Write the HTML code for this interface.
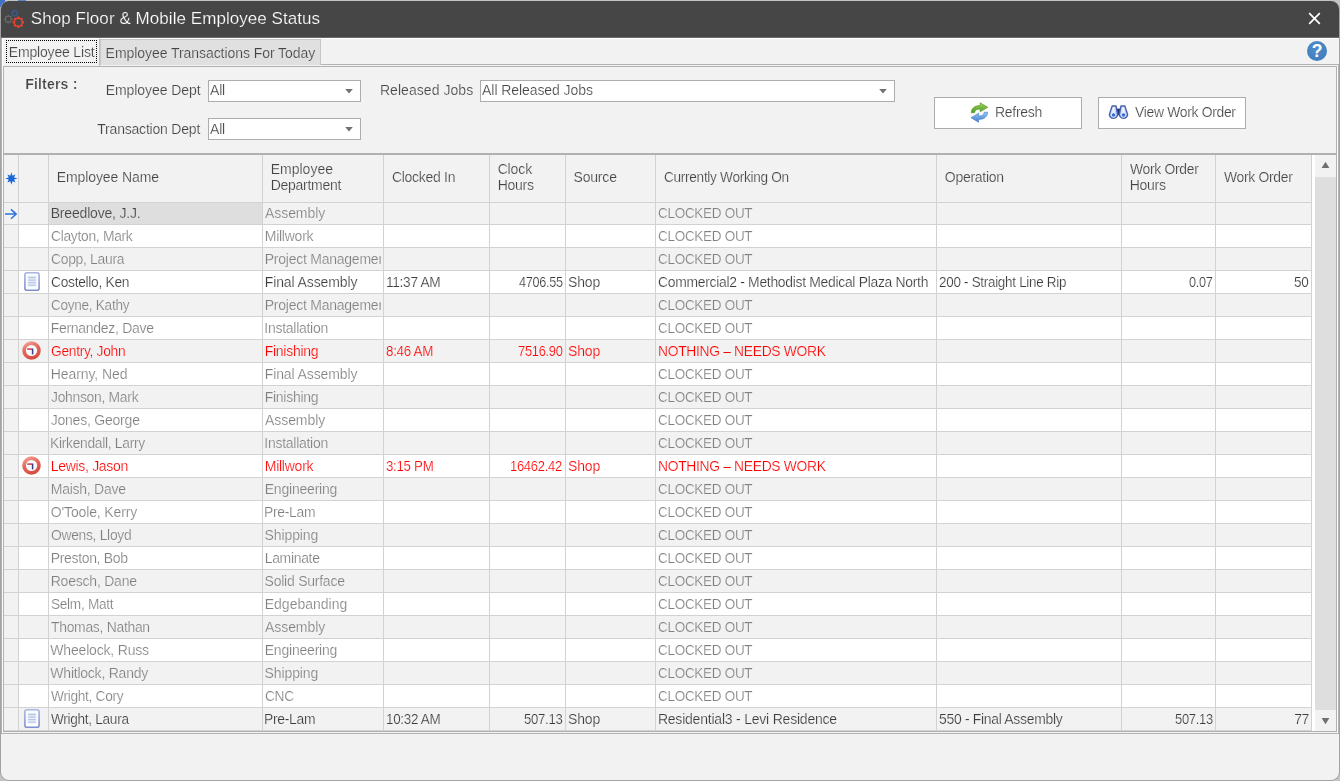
<!DOCTYPE html><html lang="en"><head><meta charset="utf-8"><title>Shop Floor &amp; Mobile Employee Status</title><style>
*{box-sizing:border-box;margin:0;padding:0}
html,body{width:1340px;height:781px;overflow:hidden;background:#f2f2f2}
body{position:relative;font-family:"Liberation Sans",sans-serif;font-size:14px;color:#4a4a4a}
.a{position:absolute}
.t{position:absolute;white-space:nowrap;line-height:20px;height:20px;transform-origin:0 0}
.combo{background:#fff;border:1px solid #adadad;height:22px}
.btn{background:#fff;border:1px solid #adadad;height:32px;top:97px;width:148px}
.vl{position:absolute;width:1px;background:#d2d2d2;top:155px;height:576px}
.hl{position:absolute;height:1px;background:#d2d2d2;left:4px;width:1308px}
.rw{position:absolute;left:19px;width:1296px;background:#fff}
.ic{position:absolute;overflow:visible}
</style></head><body>
<div class="a" style="left:0;top:0;width:1340px;height:781px;background:#c4c4c4"></div>
<div class="a" style="left:0;top:0;width:5px;height:7px;background:#3f74c8"></div>
<div class="a" style="left:18px;top:0;width:8px;height:1px;background:#5b86c9"></div>
<div class="a" style="left:0;top:1px;width:1340px;height:780px;background:#a2a2a2;border-radius:9px"></div>
<div class="a" style="left:1px;top:1px;width:1338px;height:779px;background:#f2f2f2;border-radius:8px"></div>
<div class="a" style="left:1px;top:1px;width:1338px;height:37px;background:#464646;border-radius:8px 8px 0 0"></div>
<div class="a" style="left:1px;top:37px;width:1338px;height:1px;background:#6a6a6a"></div>
<div class="a" style="left:2px;top:38px;width:1336px;height:1px;background:#fff"></div>
<div class="a" style="left:1px;top:38px;width:1px;height:696px;background:#b2b2b2"></div>
<div class="a" style="left:1338px;top:64px;width:1px;height:670px;background:#b2b2b2"></div>
<div class="a" style="left:2px;top:39px;width:1px;height:694px;background:#fbfbfb"></div>
<div class="a" style="left:1337px;top:66px;width:1px;height:667px;background:#fbfbfb"></div>
<div class="a" style="left:1px;top:64px;width:1338px;height:1px;background:#b4b4b4"></div>
<div class="a" style="left:1px;top:733px;width:1338px;height:1px;background:#b4b4b4"></div>
<div class="a" style="left:3px;top:66px;width:1334px;height:666px;border:1px solid #b2b2b2;background:#f2f2f2"></div>
<div class="a" style="left:2px;top:38px;width:98px;height:28px;background:#f2f2f2;border-left:1px solid #fff;border-top:1px solid #fff;border-right:1px solid #c0c0c0"></div>
<div class="a" style="left:6px;top:40px;width:91px;height:23px;border:1px dotted #000"></div>
<div class="a" style="left:100px;top:39px;width:221px;height:26px;background:#e0e0e0;border:1px solid #c6c6c6;border-bottom:none"></div>
<div class="a combo" style="left:208px;top:80px;width:153px"></div>
<svg class="ic" style="left:344.4px;top:88px" width="10" height="6" viewBox="0 0 10 6"><path d="M1.2 0.9 L8.8 0.9 L5 5.4 Z" fill="#707070"/></svg>
<div class="a combo" style="left:208px;top:118px;width:153px"></div>
<svg class="ic" style="left:344.4px;top:126px" width="10" height="6" viewBox="0 0 10 6"><path d="M1.2 0.9 L8.8 0.9 L5 5.4 Z" fill="#707070"/></svg>
<div class="a combo" style="left:480px;top:80px;width:415px"></div>
<svg class="ic" style="left:878.4px;top:88px" width="10" height="6" viewBox="0 0 10 6"><path d="M1.2 0.9 L8.8 0.9 L5 5.4 Z" fill="#707070"/></svg>
<div class="a btn" style="left:934px"></div>
<div class="a btn" style="left:1098px"></div>

<div class="a" style="left:4px;top:153px;width:1332px;height:2px;background:#b0b0b0"></div>
<div class="a" style="left:49px;top:203px;width:213px;height:21px;background:#dedede"></div>
<div class="hl" style="top:224px"></div>
<div class="rw" style="top:225px;height:22px"></div>
<div class="hl" style="top:247px"></div>
<div class="hl" style="top:270px"></div>
<div class="rw" style="top:271px;height:22px"></div>
<div class="hl" style="top:293px"></div>
<div class="hl" style="top:316px"></div>
<div class="rw" style="top:317px;height:22px"></div>
<div class="hl" style="top:339px"></div>
<div class="hl" style="top:362px"></div>
<div class="rw" style="top:363px;height:22px"></div>
<div class="hl" style="top:385px"></div>
<div class="hl" style="top:408px"></div>
<div class="rw" style="top:409px;height:22px"></div>
<div class="hl" style="top:431px"></div>
<div class="hl" style="top:454px"></div>
<div class="rw" style="top:455px;height:22px"></div>
<div class="hl" style="top:477px"></div>
<div class="hl" style="top:500px"></div>
<div class="rw" style="top:501px;height:22px"></div>
<div class="hl" style="top:523px"></div>
<div class="hl" style="top:546px"></div>
<div class="rw" style="top:547px;height:22px"></div>
<div class="hl" style="top:569px"></div>
<div class="hl" style="top:592px"></div>
<div class="rw" style="top:593px;height:22px"></div>
<div class="hl" style="top:615px"></div>
<div class="hl" style="top:638px"></div>
<div class="rw" style="top:639px;height:22px"></div>
<div class="hl" style="top:661px"></div>
<div class="hl" style="top:684px"></div>
<div class="rw" style="top:685px;height:22px"></div>
<div class="hl" style="top:707px"></div>
<div class="hl" style="top:730px"></div>
<div class="hl" style="top:202px"></div>
<div class="vl" style="left:18px"></div>
<div class="vl" style="left:48px"></div>
<div class="vl" style="left:262px"></div>
<div class="vl" style="left:383px"></div>
<div class="vl" style="left:489px"></div>
<div class="vl" style="left:565px"></div>
<div class="vl" style="left:655px"></div>
<div class="vl" style="left:936px"></div>
<div class="vl" style="left:1121px"></div>
<div class="vl" style="left:1215px"></div>
<div class="vl" style="left:1311px"></div>
<div class="a" style="left:1312px;top:155px;width:3px;height:576px;background:#fff"></div>
<div class="a" style="left:1315px;top:155px;width:21px;height:576px;background:#f2f2f2"></div>
<div class="a" style="left:1315px;top:177px;width:21px;height:533px;background:#dedede"></div>
<svg class="ic" style="left:1321px;top:161px" width="9" height="8" viewBox="0 0 9 8"><path d="M4.5 0.8 L8.4 7 L0.6 7 Z" fill="#707070"/></svg>
<svg class="ic" style="left:1321px;top:717px" width="9" height="8" viewBox="0 0 9 8"><path d="M4.5 7.2 L8.4 1 L0.6 1 Z" fill="#707070"/></svg>
<svg class="ic" style="left:0;top:0" width="30" height="38" viewBox="0 0 30 38"><path d="M14.13 9.75 L15.37 9.75 L15.42 10.50 L16.25 10.84 L16.82 10.35 L17.70 11.23 L17.21 11.80 L17.55 12.63 L18.30 12.68 L18.30 13.92 L17.55 13.97 L17.21 14.80 L17.70 15.37 L16.82 16.25 L16.25 15.76 L15.42 16.10 L15.37 16.85 L14.13 16.85 L14.08 16.10 L13.25 15.76 L12.68 16.25 L11.80 15.37 L12.29 14.80 L11.95 13.97 L11.20 13.92 L11.20 12.68 L11.95 12.63 L12.29 11.80 L11.80 11.23 L12.68 10.35 L13.25 10.84 L14.08 10.50 Z M12.85 13.30 a1.90 1.90 0 1 0 3.80 0 a1.90 1.90 0 1 0 -3.80 0 Z" fill="#3a5d90" fill-rule="evenodd"/><path d="M7.56 14.96 L9.04 14.96 L9.10 15.86 L10.10 16.27 L10.77 15.68 L11.82 16.73 L11.23 17.40 L11.64 18.40 L12.54 18.46 L12.54 19.94 L11.64 20.00 L11.23 21.00 L11.82 21.67 L10.77 22.72 L10.10 22.13 L9.10 22.54 L9.04 23.44 L7.56 23.44 L7.50 22.54 L6.50 22.13 L5.83 22.72 L4.78 21.67 L5.37 21.00 L4.96 20.00 L4.06 19.94 L4.06 18.46 L4.96 18.40 L5.37 17.40 L4.78 16.73 L5.83 15.68 L6.50 16.27 L7.50 15.86 Z M5.90 19.20 a2.40 2.40 0 1 0 4.80 0 a2.40 2.40 0 1 0 -4.80 0 Z" fill="#686868" fill-rule="evenodd"/><path d="M17.30 16.59 L19.30 16.59 L19.38 17.79 L20.72 18.34 L21.64 17.55 L23.05 18.96 L22.26 19.88 L22.81 21.22 L24.01 21.30 L24.01 23.30 L22.81 23.38 L22.26 24.72 L23.05 25.64 L21.64 27.05 L20.72 26.26 L19.38 26.81 L19.30 28.01 L17.30 28.01 L17.22 26.81 L15.88 26.26 L14.96 27.05 L13.55 25.64 L14.34 24.72 L13.79 23.38 L12.59 23.30 L12.59 21.30 L13.79 21.22 L14.34 19.88 L13.55 18.96 L14.96 17.55 L15.88 18.34 L17.22 17.79 Z M15.10 22.30 a3.20 3.20 0 1 0 6.40 0 a3.20 3.20 0 1 0 -6.40 0 Z" fill="#f0402f" fill-rule="evenodd"/></svg><svg class="ic" style="left:1308px;top:12px" width="13" height="13" viewBox="0 0 13 13"><path d="M1.2 1.2 L11.8 11.8 M11.8 1.2 L1.2 11.8" stroke="#fff" stroke-width="1.7" fill="none"/></svg><svg class="ic" style="left:1306px;top:40px" width="22" height="22" viewBox="0 0 22 22"><defs><radialGradient id="hg" cx="0.45" cy="0.35" r="0.75"><stop offset="0" stop-color="#4f8ccb"/><stop offset="1" stop-color="#3f7cbc"/></radialGradient></defs><circle cx="11" cy="11" r="10" fill="url(#hg)"/><text x="11" y="17.2" text-anchor="middle" font-family="'Liberation Sans',sans-serif" font-weight="bold" font-size="17.5" fill="#fff">?</text></svg><svg class="ic" style="left:969px;top:101px" width="21" height="23" viewBox="0 0 21 23"><defs><linearGradient id="rg" x1="0" y1="0" x2="0" y2="1"><stop offset="0" stop-color="#9fd35a"/><stop offset="1" stop-color="#4f9a23"/></linearGradient><linearGradient id="rb" x1="0" y1="0" x2="0" y2="1"><stop offset="0" stop-color="#9cc9f2"/><stop offset="1" stop-color="#3f7fd0"/></linearGradient></defs><path d="M2.2 11.8 C2.4 7.2 5.6 4.6 11.2 4.6 L11.2 1.8 L18.8 6.3 L11.2 10.8 L11.2 8.0 C8.2 8.0 6.0 8.8 5.4 11.8 Z" fill="url(#rg)" stroke="#4e9426" stroke-width="0.6" stroke-linejoin="round"/><path d="M18.6 11.2 C18.4 15.8 15.2 18.4 9.6 18.4 L9.6 21.2 L2.0 16.7 L9.6 12.2 L9.6 15.0 C12.6 15.0 14.8 14.2 15.4 11.2 Z" fill="url(#rb)" stroke="#3b74c2" stroke-width="0.6" stroke-linejoin="round"/></svg><svg class="ic" style="left:1108px;top:104px" width="22" height="17" viewBox="0 0 22 17"><defs><linearGradient id="bg1" x1="0" y1="0" x2="1" y2="0"><stop offset="0" stop-color="#bcc9ea"/><stop offset="0.5" stop-color="#eef2fb"/><stop offset="1" stop-color="#aebde4"/></linearGradient></defs><rect x="8.2" y="4.6" width="4.6" height="6.6" fill="#22347f"/><path d="M4.2 2.0 L8.0 2.0 L9.6 10.2 A4.1 4.1 0 1 1 1.4 10.4 Z" fill="url(#bg1)" stroke="#4561ad" stroke-width="1.4" stroke-linejoin="round"/><path d="M13.0 2.0 L16.8 2.0 L19.6 10.4 A4.1 4.1 0 1 1 11.4 10.2 Z" fill="url(#bg1)" stroke="#4561ad" stroke-width="1.4" stroke-linejoin="round"/><circle cx="5.5" cy="11.0" r="1.7" fill="#2f6fdc"/><circle cx="15.5" cy="11.0" r="1.7" fill="#2f6fdc"/></svg><svg class="ic" style="left:4px;top:170px" width="15" height="17" viewBox="0 0 15 17"><path d="M7.40 2.30 L8.51 5.82 L11.36 4.54 L10.08 7.39 L13.60 8.50 L10.08 9.61 L11.36 12.46 L8.51 11.18 L7.40 14.70 L6.29 11.18 L3.44 12.46 L4.72 9.61 L1.20 8.50 L4.72 7.39 L3.44 4.54 L6.29 5.82 Z" fill="#1768d8"/></svg><svg class="ic" style="left:4px;top:207px" width="14" height="14" viewBox="0 0 14 14"><path d="M1 7.1 L12 7.1 M7 2.4 L12.2 7.1 L7 11.8" stroke="#2d74de" stroke-width="1.5" fill="none" stroke-linejoin="miter"/></svg><svg class="ic" style="left:23px;top:271px" width="18" height="21" viewBox="0 0 18 21"><defs><linearGradient id="dg1" x1="0" y1="0" x2="0" y2="1"><stop offset="0" stop-color="#a9b6e2"/><stop offset="1" stop-color="#7f90cc"/></linearGradient></defs><rect x="1.9" y="1.7" width="14.2" height="17.6" rx="2" ry="2" fill="#fbfcff" stroke="url(#dg1)" stroke-width="1.6"/><path d="M5.2 6.5 H12.8 M5.2 9.1 H12.8 M5.2 11.6 H12.8 M5.2 14.2 H12.8" stroke="#8b9bd1" stroke-width="1.3" fill="none"/><rect x="4.6" y="5.4" width="8.8" height="10.2" fill="#dfe5f6" opacity="0.55"/></svg><svg class="ic" style="left:21px;top:340px" width="21" height="21" viewBox="0 0 21 21"><defs><linearGradient id="rr1" x1="0.2" y1="0" x2="0.6" y2="1"><stop offset="0" stop-color="#f3a79c"/><stop offset="0.45" stop-color="#e4685a"/><stop offset="1" stop-color="#d54a3e"/></linearGradient></defs><circle cx="10.5" cy="10.5" r="9.3" fill="url(#rr1)"/><circle cx="10.5" cy="10.5" r="5.6" fill="#f7fbff"/><path d="M6.2 9.1 H11.4" stroke="#d2374a" stroke-width="1.5" fill="none"/><path d="M11.6 8.6 V14.4" stroke="#3a3f7d" stroke-width="1.5" fill="none"/></svg><svg class="ic" style="left:21px;top:455px" width="21" height="21" viewBox="0 0 21 21"><defs><linearGradient id="rr2" x1="0.2" y1="0" x2="0.6" y2="1"><stop offset="0" stop-color="#f3a79c"/><stop offset="0.45" stop-color="#e4685a"/><stop offset="1" stop-color="#d54a3e"/></linearGradient></defs><circle cx="10.5" cy="10.5" r="9.3" fill="url(#rr2)"/><circle cx="10.5" cy="10.5" r="5.6" fill="#f7fbff"/><path d="M6.2 9.1 H11.4" stroke="#d2374a" stroke-width="1.5" fill="none"/><path d="M11.6 8.6 V14.4" stroke="#3a3f7d" stroke-width="1.5" fill="none"/></svg><svg class="ic" style="left:23px;top:708px" width="18" height="21" viewBox="0 0 18 21"><defs><linearGradient id="dg2" x1="0" y1="0" x2="0" y2="1"><stop offset="0" stop-color="#a9b6e2"/><stop offset="1" stop-color="#7f90cc"/></linearGradient></defs><rect x="1.9" y="1.7" width="14.2" height="17.6" rx="2" ry="2" fill="#fbfcff" stroke="url(#dg2)" stroke-width="1.6"/><path d="M5.2 6.5 H12.8 M5.2 9.1 H12.8 M5.2 11.6 H12.8 M5.2 14.2 H12.8" stroke="#8b9bd1" stroke-width="1.3" fill="none"/><rect x="4.6" y="5.4" width="8.8" height="10.2" fill="#dfe5f6" opacity="0.55"/></svg>
<div class="a" style="left:0;top:0;width:1340px;height:781px;will-change:transform">
<div class="t" style="left:30.86px;top:9px;color:#ffffff;-webkit-text-stroke:0.2px #464646;font-size:17px;letter-spacing:0.058px">Shop Floor &amp; Mobile Employee Status</div>
<div class="t" style="left:8.81px;top:42px;color:#444444;-webkit-text-stroke:0.2px #f2f2f2;letter-spacing:-0.176px">Employee List</div>
<div class="t" style="left:105.62px;top:43px;color:#444444;-webkit-text-stroke:0.2px #e0e0e0;letter-spacing:-0.060px">Employee Transactions For Today</div>
<div class="t" style="left:25.16px;top:74px;color:#444444;-webkit-text-stroke:0.2px #f2f2f2;font-weight:bold;letter-spacing:0.205px">Filters :</div>
<div class="t" style="left:105.72px;top:80px;color:#444444;-webkit-text-stroke:0.2px #f2f2f2;letter-spacing:-0.068px">Employee Dept</div>
<div class="t" style="left:97.29px;top:119px;color:#444444;-webkit-text-stroke:0.2px #f2f2f2;letter-spacing:-0.205px">Transaction Dept</div>
<div class="t" style="left:379.90px;top:80px;color:#444444;-webkit-text-stroke:0.2px #f2f2f2;letter-spacing:0.054px">Released Jobs</div>
<div class="t" style="left:210.08px;top:80px;color:#444444;-webkit-text-stroke:0.2px #fff;letter-spacing:-0.211px">All</div>
<div class="t" style="left:210.08px;top:119px;color:#444444;-webkit-text-stroke:0.2px #fff;letter-spacing:-0.211px">All</div>
<div class="t" style="left:482.08px;top:80px;color:#444444;-webkit-text-stroke:0.2px #fff;letter-spacing:-0.075px">All Released Jobs</div>
<div class="t" style="left:994.90px;top:102px;color:#444444;-webkit-text-stroke:0.2px #fff;letter-spacing:-0.251px">Refresh</div>
<div class="t" style="left:1134.68px;top:102px;color:#444444;-webkit-text-stroke:0.2px #fff;letter-spacing:-0.300px;transform:scaleX(0.9914)">View Work Order</div>
<div class="t" style="left:56.72px;top:167px;color:#444444;-webkit-text-stroke:0.2px #f2f2f2;letter-spacing:-0.099px">Employee Name</div>
<div class="t" style="left:270.72px;top:159px;color:#444444;-webkit-text-stroke:0.2px #f2f2f2">Employee</div>
<div class="t" style="left:270.72px;top:175px;color:#444444;-webkit-text-stroke:0.2px #f2f2f2;letter-spacing:-0.274px">Department</div>
<div class="t" style="left:391.50px;top:167px;color:#444444;-webkit-text-stroke:0.2px #f2f2f2;letter-spacing:-0.300px;transform:scaleX(0.9995)">Clocked In</div>
<div class="t" style="left:497.64px;top:159px;color:#444444;-webkit-text-stroke:0.2px #f2f2f2;letter-spacing:-0.114px">Clock</div>
<div class="t" style="left:497.72px;top:175px;color:#444444;-webkit-text-stroke:0.2px #f2f2f2;letter-spacing:-0.277px">Hours</div>
<div class="t" style="left:573.55px;top:167px;color:#444444;-webkit-text-stroke:0.2px #f2f2f2;letter-spacing:-0.197px">Source</div>
<div class="t" style="left:663.50px;top:167px;color:#444444;-webkit-text-stroke:0.2px #f2f2f2;letter-spacing:-0.300px;transform:scaleX(0.9728)">Currently Working On</div>
<div class="t" style="left:944.79px;top:167px;color:#444444;-webkit-text-stroke:0.2px #f2f2f2;letter-spacing:-0.269px">Operation</div>
<div class="t" style="left:1129.96px;top:159px;color:#444444;-webkit-text-stroke:0.2px #f2f2f2;letter-spacing:-0.300px;transform:scaleX(0.9911)">Work Order</div>
<div class="t" style="left:1129.72px;top:175px;color:#444444;-webkit-text-stroke:0.2px #f2f2f2;letter-spacing:-0.277px">Hours</div>
<div class="t" style="left:1223.96px;top:167px;color:#444444;-webkit-text-stroke:0.2px #f2f2f2;letter-spacing:-0.300px;transform:scaleX(0.9911)">Work Order</div>
<div class="t" style="left:50.72px;top:203px;color:#444444;-webkit-text-stroke:0.2px #dedede;letter-spacing:-0.183px">Breedlove, J.J.</div>
<div class="t" style="left:265.08px;top:203px;color:#808080;-webkit-text-stroke:0.2px #f2f2f2;letter-spacing:-0.085px">Assembly</div>
<div class="t" style="left:657.50px;top:203px;color:#808080;-webkit-text-stroke:0.2px #f2f2f2;letter-spacing:-0.300px;transform:scaleX(0.9642)">CLOCKED OUT</div>
<div class="t" style="left:50.50px;top:226px;color:#808080;-webkit-text-stroke:0.2px #fff;letter-spacing:-0.300px;transform:scaleX(0.9879)">Clayton, Mark</div>
<div class="t" style="left:264.72px;top:226px;color:#808080;-webkit-text-stroke:0.2px #fff;letter-spacing:-0.245px">Millwork</div>
<div class="t" style="left:657.50px;top:226px;color:#808080;-webkit-text-stroke:0.2px #fff;letter-spacing:-0.300px;transform:scaleX(0.9642)">CLOCKED OUT</div>
<div class="t" style="left:50.50px;top:249px;color:#808080;-webkit-text-stroke:0.2px #f2f2f2;letter-spacing:-0.300px;transform:scaleX(0.9916)">Copp, Laura</div>
<div class="t" style="left:264.72px;top:249px;color:#808080;-webkit-text-stroke:0.2px #f2f2f2;letter-spacing:-0.240px;width:116.48px;overflow:hidden">Project Management</div>
<div class="t" style="left:657.50px;top:249px;color:#808080;-webkit-text-stroke:0.2px #f2f2f2;letter-spacing:-0.300px;transform:scaleX(0.9642)">CLOCKED OUT</div>
<div class="t" style="left:50.50px;top:272px;color:#3c3c3c;-webkit-text-stroke:0.2px #fff;letter-spacing:-0.300px;transform:scaleX(0.9847)">Costello, Ken</div>
<div class="t" style="left:264.72px;top:272px;color:#3c3c3c;-webkit-text-stroke:0.2px #fff;letter-spacing:-0.100px">Final Assembly</div>
<div class="t" style="left:385.50px;top:272px;color:#3c3c3c;-webkit-text-stroke:0.2px #fff;letter-spacing:-0.300px;transform:scaleX(0.9761)">11:37 AM</div>
<div class="t" style="left:518.64px;top:272px;color:#3c3c3c;-webkit-text-stroke:0.2px #fff;letter-spacing:-0.300px;transform:scaleX(0.9046)">4706.55</div>
<div class="t" style="left:568.02px;top:272px;color:#3c3c3c;-webkit-text-stroke:0.2px #fff;letter-spacing:-0.182px">Shop</div>
<div class="t" style="left:657.50px;top:272px;color:#3c3c3c;-webkit-text-stroke:0.2px #fff;letter-spacing:-0.300px;transform:scaleX(0.9935)">Commercial2 - Methodist Medical Plaza North</div>
<div class="t" style="left:939.05px;top:272px;color:#3c3c3c;-webkit-text-stroke:0.2px #fff;letter-spacing:-0.300px;transform:scaleX(0.9603)">200 - Straight Line Rip</div>
<div class="t" style="left:1188.77px;top:272px;color:#3c3c3c;-webkit-text-stroke:0.2px #fff;letter-spacing:-0.300px;transform:scaleX(0.9062)">0.07</div>
<div class="t" style="left:1294.31px;top:272px;color:#3c3c3c;-webkit-text-stroke:0.2px #fff;letter-spacing:-0.300px;transform:scaleX(0.9675)">50</div>
<div class="t" style="left:50.50px;top:295px;color:#808080;-webkit-text-stroke:0.2px #f2f2f2;letter-spacing:-0.300px;transform:scaleX(0.9716)">Coyne, Kathy</div>
<div class="t" style="left:264.72px;top:295px;color:#808080;-webkit-text-stroke:0.2px #f2f2f2;letter-spacing:-0.240px;width:116.48px;overflow:hidden">Project Management</div>
<div class="t" style="left:657.50px;top:295px;color:#808080;-webkit-text-stroke:0.2px #f2f2f2;letter-spacing:-0.300px;transform:scaleX(0.9642)">CLOCKED OUT</div>
<div class="t" style="left:50.72px;top:318px;color:#808080;-webkit-text-stroke:0.2px #fff;letter-spacing:-0.293px">Fernandez, Dave</div>
<div class="t" style="left:264.31px;top:318px;color:#808080;-webkit-text-stroke:0.2px #fff;letter-spacing:-0.270px">Installation</div>
<div class="t" style="left:657.50px;top:318px;color:#808080;-webkit-text-stroke:0.2px #fff;letter-spacing:-0.300px;transform:scaleX(0.9642)">CLOCKED OUT</div>
<div class="t" style="left:50.50px;top:341px;color:#ff0000;-webkit-text-stroke:0.2px #f2f2f2;letter-spacing:-0.300px;transform:scaleX(0.9831)">Gentry, John</div>
<div class="t" style="left:264.72px;top:341px;color:#ff0000;-webkit-text-stroke:0.2px #f2f2f2;letter-spacing:-0.276px">Finishing</div>
<div class="t" style="left:386.17px;top:341px;color:#ff0000;-webkit-text-stroke:0.2px #f2f2f2;letter-spacing:-0.300px;transform:scaleX(0.9554)">8:46 AM</div>
<div class="t" style="left:517.95px;top:341px;color:#ff0000;-webkit-text-stroke:0.2px #f2f2f2;letter-spacing:-0.300px;transform:scaleX(0.9196)">7516.90</div>
<div class="t" style="left:568.02px;top:341px;color:#ff0000;-webkit-text-stroke:0.2px #f2f2f2;letter-spacing:-0.182px">Shop</div>
<div class="t" style="left:657.50px;top:341px;color:#ff0000;-webkit-text-stroke:0.2px #f2f2f2;letter-spacing:-0.300px;transform:scaleX(0.9871)">NOTHING – NEEDS WORK</div>
<div class="t" style="left:50.72px;top:364px;color:#808080;-webkit-text-stroke:0.2px #fff;letter-spacing:-0.085px">Hearny, Ned</div>
<div class="t" style="left:264.72px;top:364px;color:#808080;-webkit-text-stroke:0.2px #fff;letter-spacing:-0.100px">Final Assembly</div>
<div class="t" style="left:657.50px;top:364px;color:#808080;-webkit-text-stroke:0.2px #fff;letter-spacing:-0.300px;transform:scaleX(0.9642)">CLOCKED OUT</div>
<div class="t" style="left:50.50px;top:387px;color:#808080;-webkit-text-stroke:0.2px #f2f2f2;letter-spacing:-0.300px;transform:scaleX(0.9927)">Johnson, Mark</div>
<div class="t" style="left:264.72px;top:387px;color:#808080;-webkit-text-stroke:0.2px #f2f2f2;letter-spacing:-0.276px">Finishing</div>
<div class="t" style="left:657.50px;top:387px;color:#808080;-webkit-text-stroke:0.2px #f2f2f2;letter-spacing:-0.300px;transform:scaleX(0.9642)">CLOCKED OUT</div>
<div class="t" style="left:50.64px;top:410px;color:#808080;-webkit-text-stroke:0.2px #fff;letter-spacing:-0.211px">Jones, George</div>
<div class="t" style="left:265.08px;top:410px;color:#808080;-webkit-text-stroke:0.2px #fff;letter-spacing:-0.085px">Assembly</div>
<div class="t" style="left:657.50px;top:410px;color:#808080;-webkit-text-stroke:0.2px #fff;letter-spacing:-0.300px;transform:scaleX(0.9642)">CLOCKED OUT</div>
<div class="t" style="left:50.47px;top:433px;color:#808080;-webkit-text-stroke:0.2px #f2f2f2;letter-spacing:-0.300px;transform:scaleX(0.9879)">Kirkendall, Larry</div>
<div class="t" style="left:264.31px;top:433px;color:#808080;-webkit-text-stroke:0.2px #f2f2f2;letter-spacing:-0.270px">Installation</div>
<div class="t" style="left:657.50px;top:433px;color:#808080;-webkit-text-stroke:0.2px #f2f2f2;letter-spacing:-0.300px;transform:scaleX(0.9642)">CLOCKED OUT</div>
<div class="t" style="left:50.72px;top:456px;color:#ff0000;-webkit-text-stroke:0.2px #fff;letter-spacing:-0.306px">Lewis, Jason</div>
<div class="t" style="left:264.72px;top:456px;color:#ff0000;-webkit-text-stroke:0.2px #fff;letter-spacing:-0.245px">Millwork</div>
<div class="t" style="left:385.50px;top:456px;color:#ff0000;-webkit-text-stroke:0.2px #fff;letter-spacing:-0.300px;transform:scaleX(0.9481)">3:15 PM</div>
<div class="t" style="left:510.49px;top:456px;color:#ff0000;-webkit-text-stroke:0.2px #fff;letter-spacing:-0.300px;transform:scaleX(0.9255)">16462.42</div>
<div class="t" style="left:568.02px;top:456px;color:#ff0000;-webkit-text-stroke:0.2px #fff;letter-spacing:-0.182px">Shop</div>
<div class="t" style="left:657.50px;top:456px;color:#ff0000;-webkit-text-stroke:0.2px #fff;letter-spacing:-0.300px;transform:scaleX(0.9871)">NOTHING – NEEDS WORK</div>
<div class="t" style="left:50.72px;top:479px;color:#808080;-webkit-text-stroke:0.2px #f2f2f2;letter-spacing:-0.254px">Maish, Dave</div>
<div class="t" style="left:264.72px;top:479px;color:#808080;-webkit-text-stroke:0.2px #f2f2f2;letter-spacing:-0.207px">Engineering</div>
<div class="t" style="left:657.50px;top:479px;color:#808080;-webkit-text-stroke:0.2px #f2f2f2;letter-spacing:-0.300px;transform:scaleX(0.9642)">CLOCKED OUT</div>
<div class="t" style="left:50.79px;top:502px;color:#808080;-webkit-text-stroke:0.2px #fff;letter-spacing:-0.140px">O'Toole, Kerry</div>
<div class="t" style="left:264.47px;top:502px;color:#808080;-webkit-text-stroke:0.2px #fff;letter-spacing:-0.300px;transform:scaleX(0.9921)">Pre-Lam</div>
<div class="t" style="left:657.50px;top:502px;color:#808080;-webkit-text-stroke:0.2px #fff;letter-spacing:-0.300px;transform:scaleX(0.9642)">CLOCKED OUT</div>
<div class="t" style="left:50.50px;top:525px;color:#808080;-webkit-text-stroke:0.2px #f2f2f2;letter-spacing:-0.300px;transform:scaleX(0.9889)">Owens, Lloyd</div>
<div class="t" style="left:264.55px;top:525px;color:#808080;-webkit-text-stroke:0.2px #f2f2f2;letter-spacing:-0.102px">Shipping</div>
<div class="t" style="left:657.50px;top:525px;color:#808080;-webkit-text-stroke:0.2px #f2f2f2;letter-spacing:-0.300px;transform:scaleX(0.9642)">CLOCKED OUT</div>
<div class="t" style="left:50.72px;top:548px;color:#808080;-webkit-text-stroke:0.2px #fff;letter-spacing:-0.337px">Preston, Bob</div>
<div class="t" style="left:264.72px;top:548px;color:#808080;-webkit-text-stroke:0.2px #fff;letter-spacing:-0.342px">Laminate</div>
<div class="t" style="left:657.50px;top:548px;color:#808080;-webkit-text-stroke:0.2px #fff;letter-spacing:-0.300px;transform:scaleX(0.9642)">CLOCKED OUT</div>
<div class="t" style="left:50.72px;top:571px;color:#808080;-webkit-text-stroke:0.2px #f2f2f2;letter-spacing:-0.217px">Roesch, Dane</div>
<div class="t" style="left:264.55px;top:571px;color:#808080;-webkit-text-stroke:0.2px #f2f2f2;letter-spacing:-0.239px">Solid Surface</div>
<div class="t" style="left:657.50px;top:571px;color:#808080;-webkit-text-stroke:0.2px #f2f2f2;letter-spacing:-0.300px;transform:scaleX(0.9642)">CLOCKED OUT</div>
<div class="t" style="left:50.50px;top:594px;color:#808080;-webkit-text-stroke:0.2px #fff;letter-spacing:-0.300px;transform:scaleX(0.9739)">Selm, Matt</div>
<div class="t" style="left:264.72px;top:594px;color:#808080;-webkit-text-stroke:0.2px #fff">Edgebanding</div>
<div class="t" style="left:657.50px;top:594px;color:#808080;-webkit-text-stroke:0.2px #fff;letter-spacing:-0.300px;transform:scaleX(0.9642)">CLOCKED OUT</div>
<div class="t" style="left:50.67px;top:617px;color:#808080;-webkit-text-stroke:0.2px #f2f2f2;letter-spacing:-0.300px;transform:scaleX(0.9950)">Thomas, Nathan</div>
<div class="t" style="left:265.08px;top:617px;color:#808080;-webkit-text-stroke:0.2px #f2f2f2;letter-spacing:-0.085px">Assembly</div>
<div class="t" style="left:657.50px;top:617px;color:#808080;-webkit-text-stroke:0.2px #f2f2f2;letter-spacing:-0.300px;transform:scaleX(0.9642)">CLOCKED OUT</div>
<div class="t" style="left:50.35px;top:640px;color:#808080;-webkit-text-stroke:0.2px #fff;letter-spacing:-0.183px">Wheelock, Russ</div>
<div class="t" style="left:264.72px;top:640px;color:#808080;-webkit-text-stroke:0.2px #fff;letter-spacing:-0.207px">Engineering</div>
<div class="t" style="left:657.50px;top:640px;color:#808080;-webkit-text-stroke:0.2px #fff;letter-spacing:-0.300px;transform:scaleX(0.9642)">CLOCKED OUT</div>
<div class="t" style="left:50.35px;top:663px;color:#808080;-webkit-text-stroke:0.2px #f2f2f2;letter-spacing:-0.231px">Whitlock, Randy</div>
<div class="t" style="left:264.55px;top:663px;color:#808080;-webkit-text-stroke:0.2px #f2f2f2;letter-spacing:-0.102px">Shipping</div>
<div class="t" style="left:657.50px;top:663px;color:#808080;-webkit-text-stroke:0.2px #f2f2f2;letter-spacing:-0.300px;transform:scaleX(0.9642)">CLOCKED OUT</div>
<div class="t" style="left:51.00px;top:686px;color:#808080;-webkit-text-stroke:0.2px #fff;letter-spacing:-0.300px;transform:scaleX(0.9780)">Wright, Cory</div>
<div class="t" style="left:264.50px;top:686px;color:#808080;-webkit-text-stroke:0.2px #fff;letter-spacing:-0.300px;transform:scaleX(0.9809)">CNC</div>
<div class="t" style="left:657.50px;top:686px;color:#808080;-webkit-text-stroke:0.2px #fff;letter-spacing:-0.300px;transform:scaleX(0.9642)">CLOCKED OUT</div>
<div class="t" style="left:51.00px;top:709px;color:#3c3c3c;-webkit-text-stroke:0.2px #f2f2f2;letter-spacing:-0.300px;transform:scaleX(0.9721)">Wright, Laura</div>
<div class="t" style="left:264.47px;top:709px;color:#3c3c3c;-webkit-text-stroke:0.2px #f2f2f2;letter-spacing:-0.300px;transform:scaleX(0.9921)">Pre-Lam</div>
<div class="t" style="left:385.50px;top:709px;color:#3c3c3c;-webkit-text-stroke:0.2px #f2f2f2;letter-spacing:-0.300px;transform:scaleX(0.9590)">10:32 AM</div>
<div class="t" style="left:523.90px;top:709px;color:#3c3c3c;-webkit-text-stroke:0.2px #f2f2f2;letter-spacing:-0.300px;transform:scaleX(0.9389)">507.13</div>
<div class="t" style="left:568.02px;top:709px;color:#3c3c3c;-webkit-text-stroke:0.2px #f2f2f2;letter-spacing:-0.182px">Shop</div>
<div class="t" style="left:657.90px;top:709px;color:#3c3c3c;-webkit-text-stroke:0.2px #f2f2f2;letter-spacing:-0.213px">Residential3 - Levi Residence</div>
<div class="t" style="left:938.50px;top:709px;color:#3c3c3c;-webkit-text-stroke:0.2px #f2f2f2;letter-spacing:-0.300px;transform:scaleX(0.9954)">550 - Final Assembly</div>
<div class="t" style="left:1174.74px;top:709px;color:#3c3c3c;-webkit-text-stroke:0.2px #f2f2f2;letter-spacing:-0.300px;transform:scaleX(0.9260)">507.13</div>
<div class="t" style="left:1294.31px;top:709px;color:#3c3c3c;-webkit-text-stroke:0.2px #f2f2f2;letter-spacing:-0.539px">77</div>
</div>
</body></html>
